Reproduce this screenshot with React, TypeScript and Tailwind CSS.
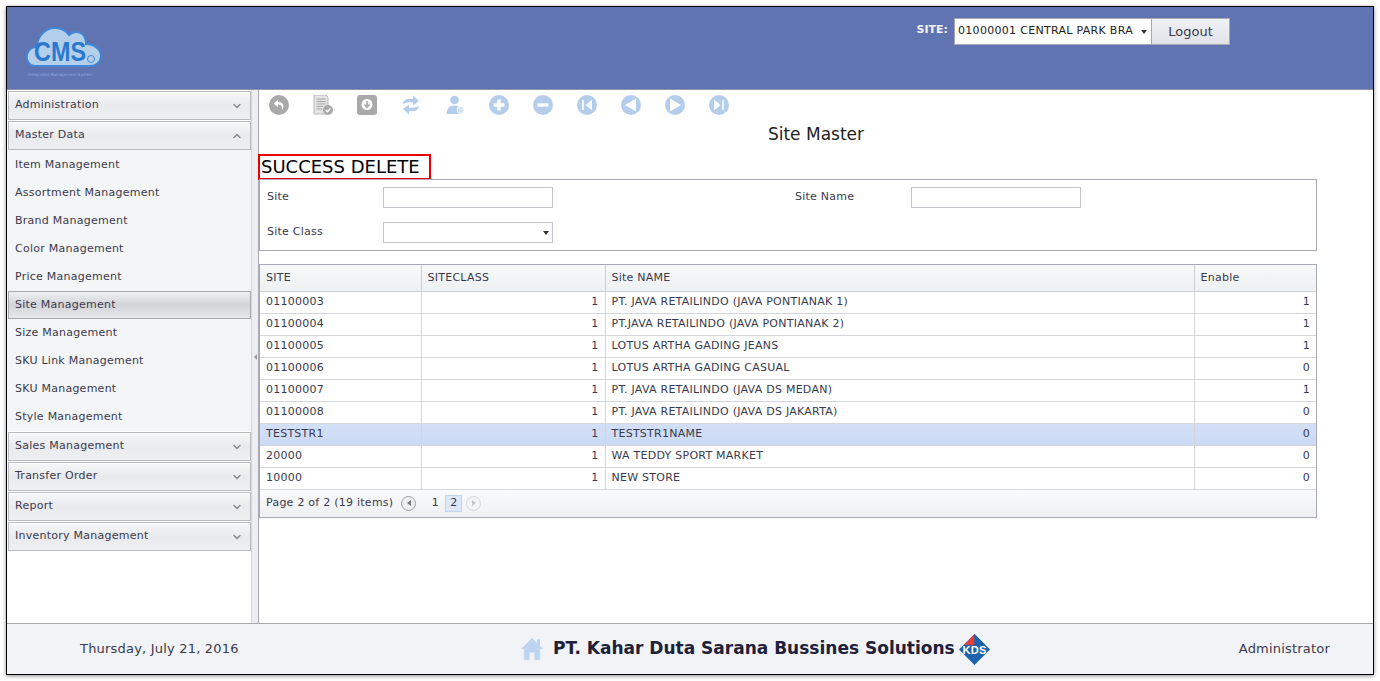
import { ChevronDown, ChevronUp } from "lucide-react";

const FONT = "font-['DejaVu_Sans',sans-serif]";

const SITES = [
  { site: "01100003", cls: 1, name: "PT. JAVA RETAILINDO (JAVA PONTIANAK 1)", enable: 1 },
  { site: "01100004", cls: 1, name: "PT.JAVA RETAILINDO (JAVA PONTIANAK 2)", enable: 1 },
  { site: "01100005", cls: 1, name: "LOTUS ARTHA GADING JEANS", enable: 1 },
  { site: "01100006", cls: 1, name: "LOTUS ARTHA GADING CASUAL", enable: 0 },
  { site: "01100007", cls: 1, name: "PT. JAVA RETAILINDO (JAVA DS MEDAN)", enable: 1 },
  { site: "01100008", cls: 1, name: "PT. JAVA RETAILINDO (JAVA DS JAKARTA)", enable: 0 },
  { site: "TESTSTR1", cls: 1, name: "TESTSTR1NAME", enable: 0 },
  { site: "20000", cls: 1, name: "WA TEDDY SPORT MARKET", enable: 0 },
  { site: "10000", cls: 1, name: "NEW STORE", enable: 0 },
];

const MASTER_ITEMS = [
  "Item Management",
  "Assortment Management",
  "Brand Management",
  "Color Management",
  "Price Management",
  "Site Management",
  "Size Management",
  "SKU Link Management",
  "SKU Management",
  "Style Management",
];

function CmsLogo() {
  return (
    <svg width="80" height="56" viewBox="0 0 80 56" className="block">
      <path
        d="M12 42 C3 42 1 33 4 28 C6 24 10 23 13 23 C13 12 22 3 32 4 C38 4 42 7 45 11 C49 7 56 7 60 12 C62 15 62 18 62 20 C70 20 77 25 77 32 C77 38 72 42 66 42 Z"
        fill="#b3cfec"
        stroke="#3f86d6"
        strokeWidth="2"
      />
      <text x="36" y="37" textAnchor="middle" fontFamily="Liberation Sans, sans-serif" fontWeight="700" fontSize="27" fill="#2b78cf" textLength="52" lengthAdjust="spacingAndGlyphs">
        CMS
      </text>
      <circle cx="67" cy="35" r="3.5" fill="#b3cfec" stroke="#3f86d6" />
      <rect x="21" y="50" width="75%" height="1" fill="#7f9bd4" opacity="0" />
      <text x="4" y="52" fontFamily="DejaVu Sans, sans-serif" fontSize="4" fill="#8fa8dd">
        Integrated Management System
      </text>
    </svg>
  );
}

function ToolIcon({ kind }: { kind: string }) {
  const blue = "#b4cdea";
  const gray = "#a9a9a9";
  if (kind === "back") {
    return (
      <svg width="20" height="20" viewBox="0 0 20 20">
        <circle cx="10" cy="10" r="10" fill={gray} />
        <path d="M9 5 L4.5 8.5 L9 12 V9.8 C12 9.8 13.5 11 13 15 C15.5 11.5 15 7 9 7 Z" fill="#fff" />
      </svg>
    );
  }
  if (kind === "doc") {
    return (
      <svg width="20" height="20" viewBox="0 0 20 20">
        <path d="M1 0 H13 L15 2 V19 H1 Z" fill="#e4e4e4" stroke="#b9b9b9" />
        <path d="M3.5 4 H12.5 M3.5 6.5 H12.5 M3.5 9 H12.5 M3.5 11.5 H10 M3.5 14 H9" stroke="#a4a4a4" strokeWidth="1.2" />
        <circle cx="15" cy="15" r="5" fill="#a9a9a9" />
        <path d="M12.7 15 L14.5 16.8 L17.4 13.4" stroke="#fff" strokeWidth="1.4" fill="none" />
      </svg>
    );
  }
  if (kind === "download") {
    return (
      <svg width="20" height="20" viewBox="0 0 20 20">
        <rect width="20" height="20" rx="3" fill={gray} />
        <circle cx="10" cy="9.5" r="5.5" fill="#fff" />
        <path d="M10 6 V11 M7.5 9.5 L10 12.3 L12.5 9.5" stroke={gray} strokeWidth="1.6" fill="none" />
      </svg>
    );
  }
  if (kind === "refresh") {
    return (
      <svg width="20" height="20" viewBox="0 0 20 20">
        <path d="M2 9 C2 5 6 3 12 4 V0.5 L18 6 L12 10.5 V7.5 C8 7 5 7.5 2 9 Z" fill={blue} />
        <path d="M18 11 C18 15 14 17 8 16 V19.5 L2 14 L8 9.5 V12.5 C12 13 15 12.5 18 11 Z" fill={blue} />
      </svg>
    );
  }
  if (kind === "user") {
    return (
      <svg width="20" height="20" viewBox="0 0 20 20">
        <circle cx="9.5" cy="5" r="4.3" fill={blue} />
        <path d="M1.5 19 C1.5 13 5 10.5 9.5 10.5 C14 10.5 16 13 16 19 Z" fill={blue} />
        <circle cx="15.5" cy="15" r="3.5" fill="#d5e2f2" stroke="#fff" />
      </svg>
    );
  }
  return (
    <svg width="20" height="20" viewBox="0 0 20 20">
      <circle cx="10" cy="10" r="10" fill={blue} />
      {kind === "plus" && <path d="M10 4.5 V15.5 M4.5 10 H15.5" stroke="#fff" strokeWidth="3.4" />}
      {kind === "minus" && <path d="M4.5 10 H15.5" stroke="#fff" strokeWidth="3.4" />}
      {kind === "first" && (
        <>
          <path d="M15 4.5 V15.5 L8.5 10 Z" fill="#fff" opacity="0.9" />
          <path d="M6 5 V15" stroke="#fff" strokeWidth="1.6" />
        </>
      )}
      {kind === "prev" && <path d="M15 3.5 V16.5 L4 10 Z" fill="#fff" />}
      {kind === "next" && <path d="M5 3.5 V16.5 L16 10 Z" fill="#fff" />}
      {kind === "last" && (
        <>
          <path d="M5 4.5 V15.5 L11.5 10 Z" fill="#fff" opacity="0.9" />
          <path d="M14 5 V15" stroke="#fff" strokeWidth="1.6" />
        </>
      )}
    </svg>
  );
}

function HomeIcon() {
  return (
    <svg width="24" height="24" viewBox="0 0 24 24">
      <path d="M12 1 L23 12 H20 V23 H14.5 V15.5 H9.5 V23 H4 V12 H1 Z" fill="#bcd4ef" stroke="#d6e3f2" strokeWidth="0.6" />
      <rect x="17" y="2.5" width="3" height="6" fill="#bcd4ef" />
    </svg>
  );
}

function KdsLogo() {
  return (
    <svg width="31" height="31" viewBox="0 0 31 31">
      <path d="M15.5 0 L31 15.5 L15.5 31 L0 15.5 Z" fill="#1c63ab" />
      <path d="M15.5 0 L15.5 11 L5 11 Z" fill="#e2403f" />
      <path d="M15.5 0 L26 11 L15.5 11 Z" fill="#1c63ab" />
      <rect x="3" y="11" width="25" height="10" fill="#fff" opacity="0" />
      <text x="15.5" y="20" textAnchor="middle" fontFamily="Liberation Sans, sans-serif" fontWeight="700" fontSize="11" fill="#fff" textLength="24" lengthAdjust="spacingAndGlyphs">
        KDS
      </text>
    </svg>
  );
}

function AccordionHeader({ label, open }: { label: string; open?: boolean }) {
  return (
    <div className="flex h-[29px] items-center justify-between border border-[#b9bac0] bg-gradient-to-b from-[#f6f7f8] via-[#e9eaed] to-[#eeeff1] pl-[6px] pr-[7px] text-[11px] tracking-[0.25px] text-[#3a3a4c] shadow-[inset_0_1px_0_#fff]">
      <span>{label}</span>
      {open ? (
        <ChevronUp size={12} strokeWidth={3} className="text-[#8b8b8f]" />
      ) : (
        <ChevronDown size={12} strokeWidth={3} className="text-[#8b8b8f]" />
      )}
    </div>
  );
}

function Sidebar() {
  return (
    <div className="flex w-[244px] shrink-0 flex-col bg-white">
      <div className="flex flex-col gap-px pl-px pt-px">
        <AccordionHeader label="Administration" />
        <AccordionHeader label="Master Data" open />
        <div className="-mt-px -ml-px flex flex-col bg-[#f4f5f7] pl-px pt-px">
          {MASTER_ITEMS.map(item =>
            item === "Site Management" ? (
              <div
                key={item}
                className="flex h-[28px] items-center border border-[#a8a9b2] bg-gradient-to-b from-[#eeeff1] via-[#d3d4d9] to-[#e6e7ea] pl-[6px] text-[11px] tracking-[0.25px] text-[#3a3a4c]"
              >
                {item}
              </div>
            ) : (
              <div key={item} className="flex h-[28px] items-center pl-[7px] text-[11px] tracking-[0.25px] text-[#3a3a4c]">
                {item}
              </div>
            ),
          )}
        </div>
        <AccordionHeader label="Sales Management" />
        <AccordionHeader label="Transfer Order" />
        <AccordionHeader label="Report" />
        <AccordionHeader label="Inventory Management" />
      </div>
    </div>
  );
}

function Field({ label, wide }: { label: string; wide?: boolean }) {
  return (
    <div className="flex items-center">
      <span className={`${wide ? "w-[116px]" : "w-[116px]"} text-[11px] tracking-[0.25px] text-[#3a3a4c]`}>{label}</span>
      <div className="h-[21px] w-[170px] border border-[#c4c5cc] bg-white" />
    </div>
  );
}

function SiteGrid() {
  return (
    <div className="mt-[13px] w-[1058px] border border-[#a8a9b5]">
      <table className="w-full table-fixed border-collapse text-[11px] tracking-[0.25px] text-[#3a3a4c]">
        <colgroup>
          <col className="w-[161px]" />
          <col className="w-[184px]" />
          <col className="w-[589px]" />
          <col />
        </colgroup>
        <thead>
          <tr className="h-[26px] bg-gradient-to-b from-[#f7f8f9] to-[#eef0f2] text-left">
            <th className="border-r border-b border-[#cfd0d6] px-[6px] font-normal">SITE</th>
            <th className="border-r border-b border-[#cfd0d6] px-[6px] font-normal">SITECLASS</th>
            <th className="border-r border-b border-[#cfd0d6] px-[6px] font-normal">Site NAME</th>
            <th className="border-b border-[#cfd0d6] px-[6px] font-normal">Enable</th>
          </tr>
        </thead>
        <tbody>
          {SITES.map(row => (
            <tr
              key={row.site}
              className={`h-[22px] ${row.site === "TESTSTR1" ? "bg-gradient-to-b from-[#d3e0f6] to-[#cbdaf5]" : "bg-white"}`}
            >
              <td className="border-r border-b border-[#d5d6dc] px-[6px]">{row.site}</td>
              <td className="border-r border-b border-[#d5d6dc] px-[6px] text-right">{row.cls}</td>
              <td className="border-r border-b border-[#d5d6dc] px-[6px]">{row.name}</td>
              <td className="border-b border-[#d5d6dc] px-[6px] text-right">{row.enable}</td>
            </tr>
          ))}
        </tbody>
      </table>
      <div className="flex h-[27px] items-center bg-gradient-to-b from-[#f9fafb] to-[#eff0f3] pl-[6px] text-[11px] tracking-[0.25px] text-[#3a3a4c]">
        <span>Page 2 of 2 (19 items)</span>
        <span className="ml-[8px] flex h-[15px] w-[15px] items-center justify-center rounded-full border border-[#9d9ea5] bg-[#eeeff1]">
          <span className="h-0 w-0 border-y-[3px] border-r-[4px] border-y-transparent border-r-[#777]" />
        </span>
        <span className="ml-[9px] w-[20px] text-center">1</span>
        <span className="flex h-[17px] w-[17px] items-center justify-center border border-[#c3d4f2] bg-[#dde7f8]">2</span>
        <span className="ml-[4px] flex h-[15px] w-[15px] items-center justify-center rounded-full border border-[#d4d5d9] bg-[#f3f4f5]">
          <span className="h-0 w-0 border-y-[3px] border-l-[4px] border-y-transparent border-l-[#c4c5c9]" />
        </span>
      </div>
    </div>
  );
}

export default function App() {
  const tools = ["back", "doc", "download", "refresh", "user", "plus", "minus", "first", "prev", "next", "last"];

  return (
    <div className={`${FONT} h-[681px] w-[1380px] overflow-hidden bg-white p-[6px]`}>
      <div className="flex h-[669px] flex-col border border-black shadow-[0_1px_4px_rgba(0,0,0,0.45)]">
        <header className="flex h-[83px] shrink-0 items-start border-b border-[#8c94ad] bg-[#6074b2]">
          <div className="ml-[17px] mt-[17px]">
            <CmsLogo />
          </div>
          <div className="ml-auto mr-[143px] mt-[11px] flex items-start">
            <span className="mr-[6px] mt-[4px] text-[11px] font-bold text-[#f1f3fa]">SITE:</span>
            <div className="flex h-[27px] w-[198px] items-center justify-between border border-[#a8a9b5] bg-white pl-[3px] pr-[4px] text-[11px] tracking-[0.3px] text-[#222]">
              <span className="w-[176px] overflow-hidden whitespace-nowrap">01000001 CENTRAL PARK BRAND</span>
              <span className="h-0 w-0 border-x-[3.5px] border-t-[4px] border-x-transparent border-t-[#333]" />
            </div>
            <div className="flex h-[27px] w-[78px] items-center justify-center border border-l-0 border-[#a8a9b5] bg-gradient-to-b from-[#f0f1f4] to-[#e2e3e9] text-[13px] text-[#3a3a4c]">
              Logout
            </div>
          </div>
        </header>

        <div className="flex min-h-0 flex-1">
          <Sidebar />
          <div className="flex w-[8px] shrink-0 items-center justify-center border-x border-l-[#d5d6dc] border-r-[#a8a9b5] bg-[#eceef1]">
            <span className="h-0 w-0 border-y-[3px] border-r-[3px] border-y-transparent border-r-[#999]" />
          </div>
          <main className="min-w-0 flex-1 bg-white">
            <div className="flex gap-6 pl-[10px] pt-[5px]">
              {tools.map(tool => (
                <ToolIcon key={tool} kind={tool} />
              ))}
            </div>
            <h1 className="mt-[7px] h-[24px] text-center text-[17px] font-normal leading-[24px] text-[#222]">Site Master</h1>
            <div className="ml-[-1px] mt-[8px] flex h-[26px] w-[173px] items-end border-2 border-[#ee0000] pl-[1px] text-[18px] leading-[22px] text-black">
              SUCCESS DELETE
            </div>
            <div className="-mt-px w-[1058px] border border-[#a8a9b5] px-[7px] pb-[7px] pt-[7px]">
              <div className="flex gap-[242px]">
                <Field label="Site" />
                <Field label="Site Name" />
              </div>
              <div className="mt-[14px] flex items-center">
                <span className="w-[116px] text-[11px] tracking-[0.25px] text-[#3a3a4c]">Site Class</span>
                <div className="flex h-[21px] w-[170px] items-center justify-end border border-[#c4c5cc] bg-white pr-[3px]">
                  <span className="h-0 w-0 border-x-[3.5px] border-t-[4px] border-x-transparent border-t-[#333]" />
                </div>
              </div>
            </div>
            <SiteGrid />
          </main>
        </div>

        <footer className="flex h-[51px] shrink-0 items-center border-t border-[#a8a9ad] bg-[#f1f3f6] text-[13px] tracking-[0.2px] text-[#3a3a4c]">
          <span className="ml-[73px] w-[440px]">Thursday, July 21, 2016</span>
          <HomeIcon />
          <span className="ml-[9px] whitespace-nowrap text-[17px] font-bold tracking-[0px] text-[#20203a]">
            PT. Kahar Duta Sarana Bussines Solutions
          </span>
          <span className="ml-[4px]">
            <KdsLogo />
          </span>
          <span className="ml-auto mr-[43px]">Administrator</span>
        </footer>
      </div>
    </div>
  );
}
